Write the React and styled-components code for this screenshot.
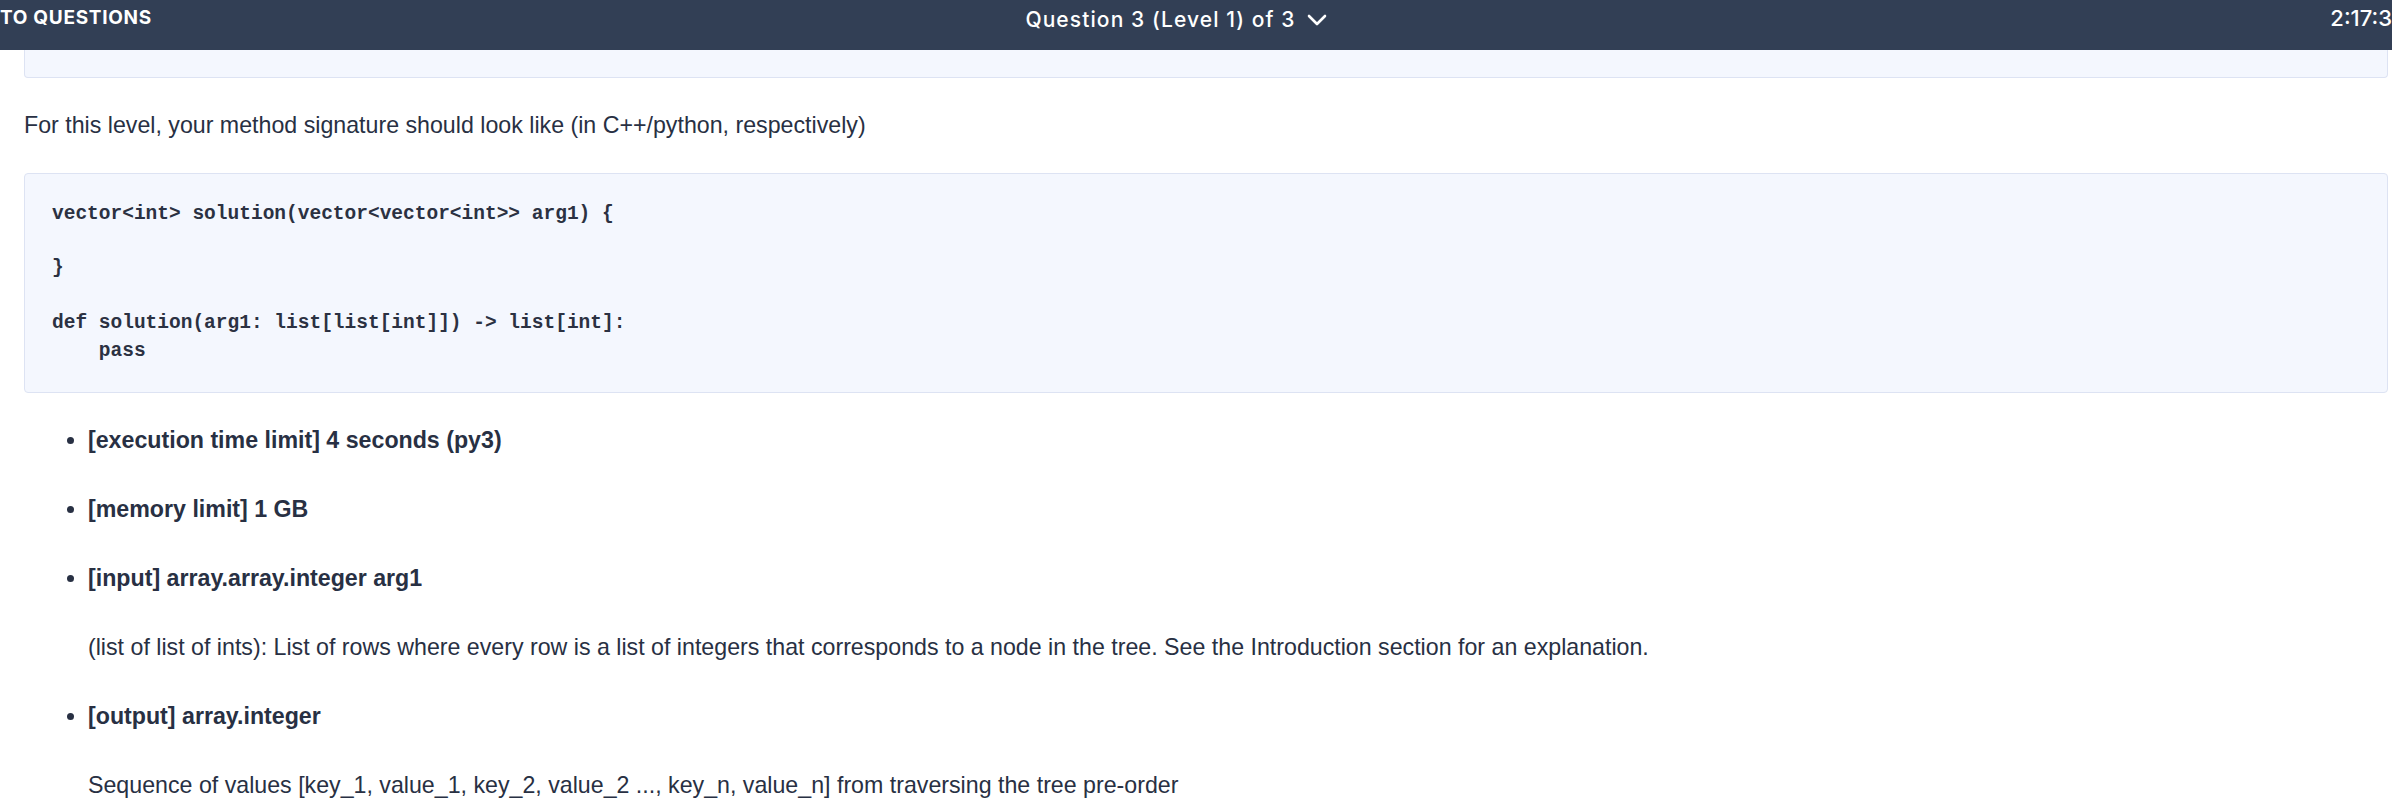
import styled, { createGlobalStyle } from "styled-components";

const GlobalStyle = createGlobalStyle`
  html, body {
    margin: 0;
    padding: 0;
    background: #ffffff;
  }
  body {
    font-family: "Liberation Sans", Arial, sans-serif;
    color: #283043;
    overflow: hidden;
  }
`;

const TopBar = styled.header`
  height: 50px;
  background: #323f55;
  color: #ffffff;
  display: grid;
  grid-template-columns: 1fr auto 1fr;
  align-items: start;
  padding-top: 6px;
  box-sizing: border-box;
  overflow: hidden;
  font-family: Inter, "Liberation Sans", sans-serif;
`;

const BackLink = styled.div`
  justify-self: start;
  font-size: 19px;
  font-weight: 700;
  letter-spacing: 0.7px;
  text-transform: uppercase;
  line-height: 23px;
`;

const QuestionPicker = styled.div`
  display: flex;
  align-items: center;
  gap: 11px;
  margin-right: 40px;
  font-size: 21px;
  font-weight: 500;
  letter-spacing: 1.1px;
  line-height: 27px;
  cursor: pointer;
`;

const Timer = styled.div`
  justify-self: end;
  font-size: 22px;
  font-weight: 500;
  line-height: 25px;
  white-space: nowrap;
`;

const Content = styled.main`
  padding: 0 4px 0 24px;
`;

const CodeBox = styled.pre`
  margin: ${({ $tail }) => ($tail ? "0" : "30px 0 0")};
  height: ${({ $tail }) => ($tail ? "28px" : "auto")};
  box-sizing: border-box;
  padding: ${({ $tail }) => ($tail ? "0" : "27px")};
  background: #f4f7fe;
  border: 1px solid #dde3f3;
  border-top: ${({ $tail }) => ($tail ? "none" : "1px solid #dde3f3")};
  border-radius: ${({ $tail }) => ($tail ? "0 0 4px 4px" : "4px")};
  font-family: "Liberation Mono", "Courier New", monospace;
  font-weight: 700;
  font-size: 19.5px;
  line-height: 27.4px;
  color: #2b3142;
  white-space: pre;
`;

const Para = styled.p`
  margin: 30px 0 0;
  font-size: 23.2px;
  line-height: 34.5px;
`;

const Limits = styled.ul`
  margin: 30px 0 0;
  padding-left: 64px;
  font-size: 23.2px;
  line-height: 34.5px;
`;

const Limit = styled.li`
  font-weight: 700;
  margin-bottom: 34.5px;
`;

const Detail = styled.p`
  margin: 34.5px 0 0;
  font-weight: 400;
`;

const Chevron = () => (
  <svg width="20" height="12" viewBox="0 0 20 12" fill="none">
    <path d="M2 2l8 8 8-8" stroke="#ffffff" strokeWidth="2.6" strokeLinecap="round" strokeLinejoin="round" />
  </svg>
);

const signature = `vector<int> solution(vector<vector<int>> arg1) {

}

def solution(arg1: list[list[int]]) -> list[int]:
    pass`;

const limits = [
  { title: "[execution time limit] 4 seconds (py3)" },
  { title: "[memory limit] 1 GB" },
  {
    title: "[input] array.array.integer arg1",
    detail:
      "(list of list of ints): List of rows where every row is a list of integers that corresponds to a node in the tree. See the Introduction section for an explanation.",
  },
  {
    title: "[output] array.integer",
    detail:
      "Sequence of values [key_1, value_1, key_2, value_2 ..., key_n, value_n] from traversing the tree pre-order",
  },
];

export default function App() {
  return (
    <>
      <GlobalStyle />
      <TopBar>
        <BackLink>TO QUESTIONS</BackLink>
        <QuestionPicker>
          Question 3 (Level 1) of 3
          <Chevron />
        </QuestionPicker>
        <Timer>2:17:3</Timer>
      </TopBar>
      <Content>
        <CodeBox $tail />
        <Para>For this level, your method signature should look like (in C++/python, respectively)</Para>
        <CodeBox>{signature}</CodeBox>
        <Limits>
          {limits.map((it) => (
            <Limit key={it.title}>
              {it.title}
              {it.detail && <Detail>{it.detail}</Detail>}
            </Limit>
          ))}
        </Limits>
      </Content>
    </>
  );
}
